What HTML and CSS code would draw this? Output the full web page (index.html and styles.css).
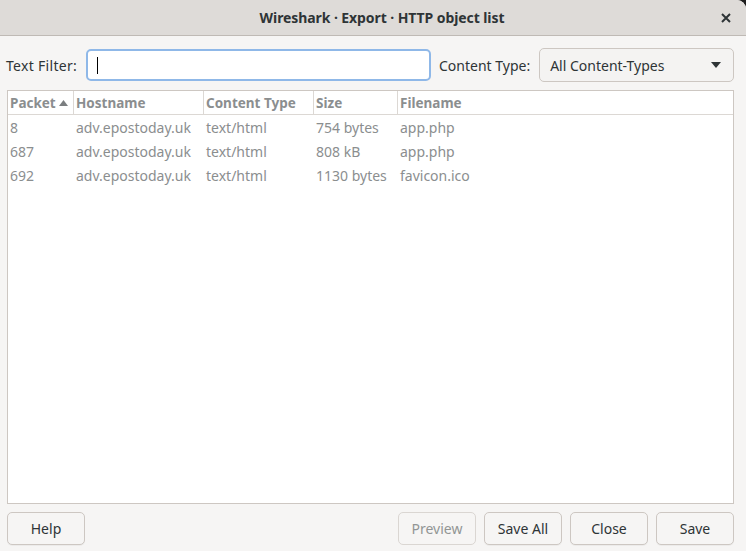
FILE: index.html
```html
<!DOCTYPE html>
<html>
<head>
<meta charset="utf-8">
<link rel="stylesheet" href="styles.css">
</head>
<body>
<div class="window">
  <div class="titlebar">
    <span class="title">Wireshark · Export · HTTP object list</span>
    <span class="close">
      <svg width="10" height="10" viewBox="0 0 10 10"><path d="M1 1L9 9M9 1L1 9" stroke="#2e3436" stroke-width="2" stroke-linecap="butt"/></svg>
    </span>
  </div>
  <div class="content">
    <div class="filters">
      <span class="label label1">Text Filter:</span>
      <div class="entry"><span class="caret"></span></div>
      <span class="label label2">Content Type:</span>
      <div class="combo">
        <span>All Content-Types</span>
        <svg width="10" height="6" viewBox="0 0 10 6"><path d="M0 0H10L5 6Z" fill="#2e3436"/></svg>
      </div>
    </div>
    <div class="table">
      <div class="row head">
        <div class="cell">Packet <svg class="sort" width="9" height="6" viewBox="0 0 9 6"><path d="M0 6L4.5 0L9 6Z" fill="#7b7e80"/></svg></div>
        <div class="cell">Hostname</div>
        <div class="cell">Content Type</div>
        <div class="cell">Size</div>
        <div class="cell last">Filename</div>
      </div>
      <div class="row">
        <div class="cell">8</div><div class="cell">adv.epostoday.uk</div><div class="cell">text/html</div><div class="cell">754 bytes</div><div class="cell">app.php</div>
      </div>
      <div class="row">
        <div class="cell">687</div><div class="cell">adv.epostoday.uk</div><div class="cell">text/html</div><div class="cell">808 kB</div><div class="cell">app.php</div>
      </div>
      <div class="row">
        <div class="cell">692</div><div class="cell">adv.epostoday.uk</div><div class="cell">text/html</div><div class="cell">1130 bytes</div><div class="cell">favicon.ico</div>
      </div>
    </div>
    <div class="buttons">
      <button class="btn">Help</button>
      <span class="spacer"></span>
      <button class="btn disabled">Preview</button>
      <button class="btn">Save All</button>
      <button class="btn">Close</button>
      <button class="btn">Save</button>
    </div>
  </div>
</div>
</body>
</html>
```
FILE: styles.css
```css
html, body {
  margin: 0;
  padding: 0;
  background: #1e1e1e;
}
body {
  font-family: "Noto Sans", "Open Sans", sans-serif;
  font-size: 14px;
  color: #2e3436;
}
.window {
  width: 746px;
  height: 551px;
  display: flex;
  flex-direction: column;
  background: #f6f5f4;
  border-top-right-radius: 9px;
  overflow: hidden;
}
.titlebar {
  height: 35px;
  flex: none;
  background: #dedbd8;
  border-bottom: 1px solid #bfbab5;
  display: flex;
  align-items: center;
  justify-content: center;
  position: relative;
}
.title {
  font-weight: bold;
  font-size: 14px;
  letter-spacing: -0.08px;
  color: #2e3436;
  margin-left: 18px;
}
.close {
  position: absolute;
  right: 15px;
  top: 13px;
  width: 10px;
  height: 10px;
  display: flex;
}
.content {
  flex: 1;
  display: flex;
  flex-direction: column;
  padding: 12px 12px 6px 6px;
}
.filters {
  display: flex;
  align-items: center;
  height: 34px;
}
.label1 {
  width: 80px;
  flex: none;
  letter-spacing: 0.3px;
}
.label2 {
  margin-left: 8px;
  margin-right: 9px;
}
.entry {
  height: 28px;
  border: 2px solid #8fb8e8;
  border-radius: 5px;
  background: #fff;
  display: flex;
  align-items: center;
  padding-left: 9px;
  box-sizing: content-box;
  width: 332px;
}
.caret {
  width: 1px;
  height: 17px;
  background: #000;
}
.combo {
  flex: 1;
  height: 32px;
  border: 1px solid #cdc7c2;
  border-radius: 5px;
  background: #f4f3f2;
  display: flex;
  align-items: center;
  justify-content: space-between;
  padding: 0 12px 0 10px;
}
.table {
  margin-top: 8px;
  margin-left: 1px;
  flex: 1;
  background: #fff;
  border: 1px solid #cdc7c2;
  color: #8b8e8f;
}
.row {
  display: grid;
  grid-template-columns: 66px 130px 110px 84px 1fr;
  height: 24px;
  align-items: center;
}
.row .cell {
  padding-left: 2px;
  white-space: nowrap;
  line-height: 24px;
  height: 24px;
  padding-top: 1px;
  box-sizing: border-box;
}
.head {
  border-bottom: 1px solid #dcd8d4;
  height: 23px;
}
.head .cell {
  font-weight: bold;
  font-size: 13.5px;
  color: #8b8e8f;
  border-right: 1px solid #dcd8d4;
  height: 23px;
  line-height: 23px;
  display: flex;
  align-items: center;
}
.head .cell.last {
  border-right: none;
}
.sort {
  margin-left: 3px;
}
.buttons {
  display: flex;
  margin-top: 8px;
  margin-left: 1px;
  gap: 8px;
}
.spacer {
  flex: 1;
}
.btn {
  width: 78px;
  height: 33px;
  font-family: inherit;
  font-size: 14px;
  color: #2e3436;
  background: #f6f5f4;
  border: 1px solid #cdc7c2;
  border-radius: 5px;
  box-shadow: 0 1px 0 rgba(0,0,0,0.04);
  padding: 0;
}
.btn.disabled {
  color: #929595;
  background: #f6f5f4;
  border-color: #dad6d2;
  box-shadow: none;
}
```
